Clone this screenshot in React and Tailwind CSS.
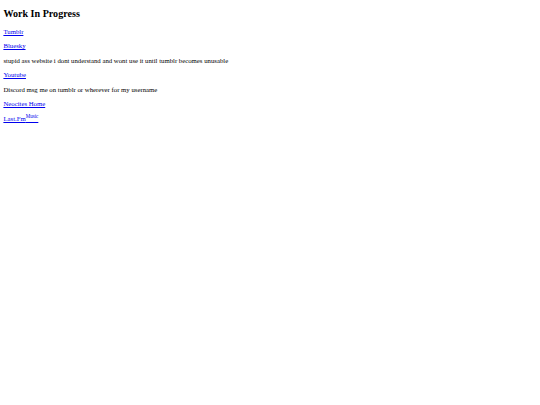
export default function App() {
  const link = 'text-[#0000ee] underline'
  return (
    <div className="p-[3.4px] font-['Liberation_Serif',serif] text-[6.75px] leading-[1.15] text-black bg-white min-h-[405px]">
      <h2 className="text-[10.1px] font-bold mt-[5px] mb-[8px]">Work In Progress</h2>
      <p className="my-[6.75px]"><a href="#" className={link}>Tumblr</a></p>
      <p className="my-[6.75px]"><a href="#" className={link}>Bluesky</a></p>
      <p className="my-[6.75px]">stupid ass website i dont understand and wont use it until tumblr becomes unusable</p>
      <p className="my-[6.75px]"><a href="#" className={link}>Youtube</a></p>
      <p className="my-[6.75px]">Discord msg me on tumblr or wherever for my username</p>
      <p className="my-[6.75px]"><a href="#" className={link}>Neocites Home</a></p>
      <p className="my-[6.75px]"><a href="#" className={link}>Last.Fm<sup>Music</sup></a></p>
    </div>
  )
}
